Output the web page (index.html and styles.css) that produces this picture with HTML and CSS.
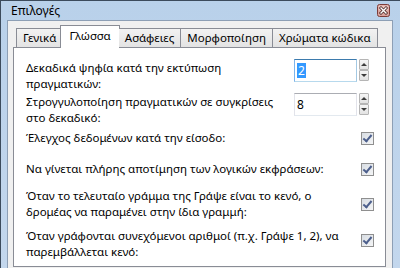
FILE: index.html
```html
<!DOCTYPE html>
<html lang="el">
<head>
    <meta charset="UTF-8">
    <meta name="viewport" content="width=device-width, initial-scale=1.0">
    <title>Επιλογές</title>
    <link rel="stylesheet" href="styles.css">
</head>
<body>
    <div class="window">
        <div class="titlebar">
            <span class="title">Επιλογές</span>
            <span class="close-btn">
                <svg width="13" height="13" viewBox="0 0 13 13">
                    <rect x="0.5" y="0.5" width="12" height="12" rx="2" fill="#d9a29c" stroke="#7c3c38"/>
                    <rect x="1.5" y="1.5" width="10" height="5" rx="1" fill="#ebc3bd"/>
                    <path d="M4 4 L9 9 M9 4 L4 9" stroke="#4a2624" stroke-width="3" stroke-linecap="square"/>
                    <path d="M4 4 L9 9 M9 4 L4 9" stroke="#fff" stroke-width="1.4" stroke-linecap="square"/>
                </svg>
            </span>
        </div>
        <div class="client">
            <div class="tabs">
                <div class="tab">Γενικά</div>
                <div class="tab active">Γλώσσα</div>
                <div class="tab">Ασάφειες</div>
                <div class="tab">Μορφοποίηση</div>
                <div class="tab">Χρώματα κώδικα</div>
            </div>
            <div class="panel">
                <div class="row">
                    <div class="label">Δεκαδικά ψηφία κατά την εκτύπωση<br>πραγματικών:</div>
                    <div class="spin focused">
                        <div class="spin-input"><span class="selected">2</span></div>
                        <div class="spin-btns">
                            <span class="spin-btn"><i class="arrow-up"></i></span>
                            <span class="spin-btn"><i class="arrow-down"></i></span>
                        </div>
                    </div>
                </div>
                <div class="row gap-xs">
                    <div class="label">Στρογγυλοποίηση πραγματικών σε συγκρίσεις<br>στο δεκαδικό:</div>
                    <div class="spin">
                        <div class="spin-input">8</div>
                        <div class="spin-btns">
                            <span class="spin-btn"><i class="arrow-up"></i></span>
                            <span class="spin-btn"><i class="arrow-down"></i></span>
                        </div>
                    </div>
                </div>
                <div class="row check-row gap-s">
                    <div class="label">Έλεγχος δεδομένων κατά την είσοδο:</div>
                    <span class="checkbox"></span>
                </div>
                <div class="row check-row gap-l">
                    <div class="label">Να γίνεται πλήρης αποτίμηση των λογικών εκφράσεων:</div>
                    <span class="checkbox"></span>
                </div>
                <div class="row check-row gap-m2">
                    <div class="label">Όταν το τελευταίο γράμμα της Γράψε είναι το κενό, ο<br>δρομέας να παραμένει στην ίδια γραμμή:</div>
                    <span class="checkbox"></span>
                </div>
                <div class="row check-row top gap-m">
                    <div class="label">Όταν γράφονται συνεχόμενοι αριθμοί (π.χ. Γράψε 1, 2), να<br>παρεμβάλλεται κενό:</div>
                    <span class="checkbox"></span>
                </div>
            </div>
        </div>
    </div>
</body>
</html>
```

FILE: styles.css
```css
body {
    margin: 0;
    font-family: "Noto Sans", sans-serif;
    font-size: 11.5px;
    color: #000;
    overflow: hidden;
}

.window {
    width: 400px;
    height: 268px;
    box-sizing: border-box;
    display: flex;
    flex-direction: column;
    padding: 0 7px 0 6px;
    background: linear-gradient(#b9d1ea, #c3d7ed);
    border-top: 1px solid #3c4b5c;
    border-left: 1px solid #3c4b5c;
    overflow: hidden;
}

.titlebar {
    height: 19px;
    display: flex;
    justify-content: space-between;
    align-items: flex-start;
    flex-shrink: 0;
}

.title {
    padding-left: 4px;
    font-size: 12px;
    line-height: 19px;
}

.close-btn {
    margin-top: 3px;
    margin-right: 3px;
    height: 13px;
}

.client {
    flex: 1;
    display: flex;
    flex-direction: column;
    background-color: #f0f0f0;
    border: 1px solid #8d9fb5;
    border-bottom: none;
    padding: 4px 6px 0 5px;
}

/* tab strip */
.tabs {
    display: flex;
    align-items: flex-end;
    padding-left: 3px;
    position: relative;
    z-index: 1;
}

.tab {
    height: 19px;
    line-height: 18px;
    padding: 0 6px;
    box-sizing: border-box;
    border: 1px solid #898c95;
    border-bottom: none;
    margin-right: -1px;
    background: linear-gradient(#f2f2f2, #e3e3e3);
    white-space: nowrap;
}

.tab.active {
    height: 23px;
    line-height: 20px;
    margin: 0 -1px -1px -2px;
    padding: 0 8px;
    background-color: #fff;
    background-image: none;
}

.tab.active + .tab {
    border-left: none;
}

.panel {
    height: 220px;
    box-sizing: border-box;
    background-color: #fff;
    border: 1px solid #898c95;
    padding: 12px 11px 0 12px;
}

/* option rows */
.row {
    display: flex;
    justify-content: space-between;
    align-items: flex-start;
}

.label {
    line-height: 16px;
}

.check-row {
    align-items: center;
}

.check-row.top {
    align-items: flex-start;
}

.check-row.top .checkbox {
    margin-top: 6px;
}

.gap-xs { margin-top: 2px; }
.gap-s { margin-top: 4px; }
.gap-m { margin-top: 8px; }
.gap-m2 { margin-top: 11px; }
.gap-l { margin-top: 15px; }

/* spin box */
.spin {
    display: flex;
    gap: 2px;
    margin-right: 5px;
    margin-top: -1px;
}

.spin-input {
    width: 63px;
    height: 23px;
    box-sizing: border-box;
    border: 1px solid #e2e3ea;
    border-top-color: #abadb3;
    border-bottom-color: #e3e9ef;
    padding: 3px 0 0 2px;
    font-size: 12px;
    line-height: 15px;
}

.spin.focused .spin-input {
    border-color: #a4c9e3;
    border-top-color: #3d7bad;
    border-left-color: #7eb4ea;
    border-bottom-color: #b7d9ed;
}

.selected {
    display: inline-block;
    background-color: #3399ff;
    color: #fff;
    padding: 0 1px;
}

.spin-btns {
    display: flex;
    flex-direction: column;
}

.spin-btn {
    width: 10px;
    height: 11px;
    box-sizing: border-box;
    border: 1px solid #b5b5b5;
    border-radius: 1px;
    background: linear-gradient(#f6f6f6, #e2e2e2);
    display: flex;
    align-items: center;
    justify-content: center;
}

.arrow-up,
.arrow-down {
    width: 0;
    height: 0;
    border-left: 3px solid transparent;
    border-right: 3px solid transparent;
}

.arrow-up {
    border-bottom: 3px solid #3c3c3c;
}

.arrow-down {
    border-top: 3px solid #3c3c3c;
}

/* checkbox */
.checkbox {
    width: 13px;
    height: 13px;
    box-sizing: border-box;
    border: 1px solid #8f8f8f;
    background: linear-gradient(135deg, #d8dde3, #f4f5f6);
    flex-shrink: 0;
    position: relative;
}

.checkbox::after {
    content: "";
    position: absolute;
    left: 3px;
    top: 0px;
    width: 3px;
    height: 7px;
    border-right: 2px solid #4c5f8c;
    border-bottom: 2px solid #4c5f8c;
    transform: rotate(40deg);
}
```
